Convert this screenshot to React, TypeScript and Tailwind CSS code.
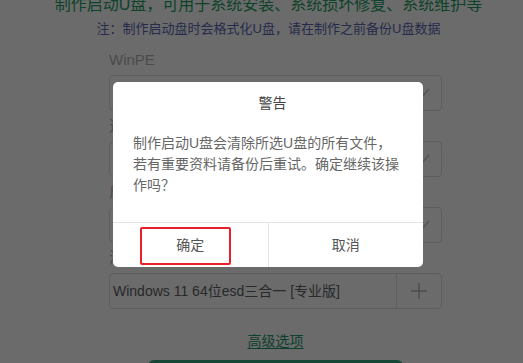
import React from "react";

const fields = [
    { label: "WinPE", value: "新版WinPE【推荐】" },
    { label: "选择U盘", value: "3.金士顿 DataTraveler 3.0" },
    { label: "启动模式", value: "USB-HDD" },
];

function Chevron() {
    return (
        <svg width="16" height="16" viewBox="0 0 16 16" fill="none" className="shrink-0">
            <path d="M1 4l7 8 7-8" stroke="#c0c4cc" strokeWidth="1.2" />
        </svg>
    );
}

export default function App() {
    return (
        <div className="relative w-[523px] h-[363px] overflow-hidden bg-white font-['Liberation_Sans','Noto_Sans_CJK_SC',sans-serif]">
            {/* page behind the modal */}
            <div className="pl-[14px] text-center">
                <div className="-mt-[7px] text-[16px] leading-[24px] text-[#23a064] whitespace-nowrap">
                    制作启动U盘，可用于系统安装、系统损坏修复、系统维护等
                </div>
                <div className="mt-[2px] text-[13px] leading-[20px] text-[#5b68b4] whitespace-nowrap">
                    注：制作启动盘时会格式化U盘，请在制作之前备份U盘数据
                </div>
            </div>

            <div className="ml-[109px] w-[333px] mt-[11px] flex flex-col gap-[5px]">
                {fields.map((f) => (
                    <div key={f.label} className="flex flex-col gap-[5px]">
                        <div className="text-[15px] leading-[20px] text-[#b4b4b4]">{f.label}</div>
                        <div className="h-[36px] border border-[#dcdfe6] rounded-[4px] flex items-center pl-[3px] pr-[11px]">
                            <span className="flex-1 text-[14px] text-[#606266] whitespace-nowrap overflow-hidden">{f.value}</span>
                            <Chevron />
                        </div>
                    </div>
                ))}
                <div className="flex flex-col gap-[5px]">
                    <div className="text-[15px] leading-[20px] text-[#b4b4b4]">添加系统</div>
                    <div className="h-[36px] border border-[#dcdfe6] rounded-[4px] flex">
                        <div className="flex-1 flex items-center pl-[3px] text-[14px] text-[#606266] whitespace-nowrap">
                            Windows 11 64位esd三合一 [专业版]
                        </div>
                        <div className="w-[45px] border-l border-[#dcdfe6] flex items-center justify-center">
                            <svg width="16" height="16" viewBox="0 0 16 16" fill="none">
                                <path d="M8 0v16M0 8h16" stroke="#8f9399" strokeWidth="1" />
                            </svg>
                        </div>
                    </div>
                </div>
            </div>

            <div className="mt-[20px] ml-[109px] w-[333px] text-center">
                <span className="text-[14px] leading-[20px] text-[#1f9a6e] underline underline-offset-2">高级选项</span>
            </div>
            <div className="mt-[7px] ml-[148px] w-[255px] h-[44px] rounded-[6px] bg-[#37a582]" />

            {/* modal mask */}
            <div className="absolute inset-0 bg-black/[0.58]" />

            {/* dialog */}
            <div className="absolute left-[113px] top-[82px] w-[310px] h-[185px] bg-white rounded-[5px] flex flex-col">
                <div className="pt-[11px] pl-[9px] text-center text-[14px] leading-[20px] text-[#444]">警告</div>
                <div className="mt-[20px] px-[20px] text-[14px] leading-[21px] text-[#666] flex-1">
                    制作启动U盘会清除所选U盘的所有文件，若有重要资料请备份后重试。确定继续该操作吗？
                </div>
                <div className="h-[45px] border-t border-[#e4e4e4] flex">
                    <button className="flex-1 flex items-center justify-center text-[14px] text-[#555]">确定</button>
                    <div className="w-px bg-[#e4e4e4]" />
                    <button className="flex-1 flex items-center justify-center text-[14px] text-[#555]">取消</button>
                </div>
                {/* red annotation box */}
                <div className="absolute left-[27px] top-[145px] w-[91px] h-[38px] border-2 border-[#e8202a] rounded-[2px]" />
            </div>
        </div>
    );
}
